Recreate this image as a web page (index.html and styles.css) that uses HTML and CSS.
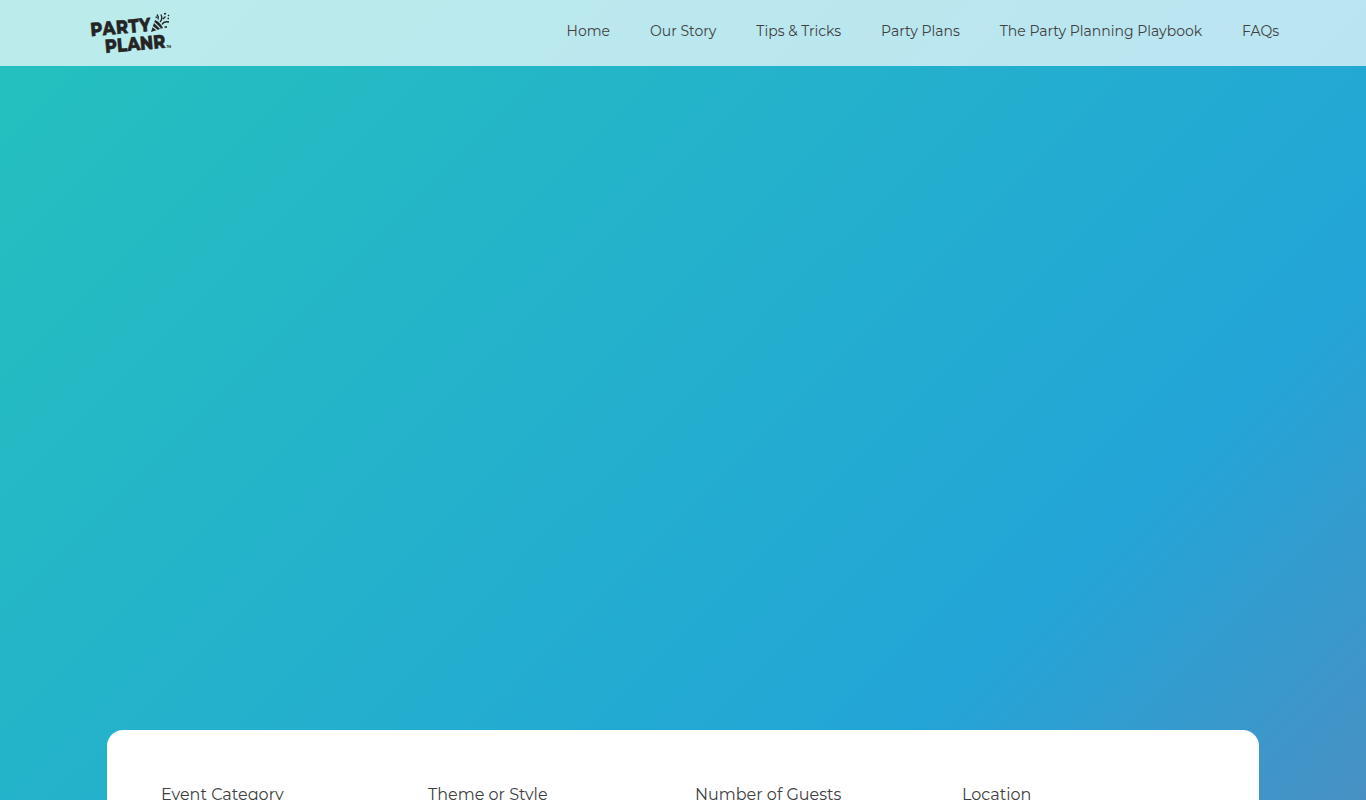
FILE: index.html
```html
<!DOCTYPE html>
<html lang="en">
<head>
<meta charset="utf-8">
<title>Party Planr</title>
<link rel="stylesheet" href="styles.css">
</head>
<body>
<div class="page">
<header class="header">
<a class="brand" aria-label="Party Planr">
<svg class="logo" viewBox="0 0 84 44" width="84" height="44">
<g class="logo-text">
<text textLength="70" lengthAdjust="spacing" transform="translate(2 26.3) rotate(-5) scale(.86 1)">PARTY</text>
<text textLength="70.500" lengthAdjust="spacing" transform="translate(16.5 43) rotate(-5) scale(.86 1)">PLANR</text>
</g>
<path class="ink" d="M62 22 66 10 Q71 12 74 18 Z"/>
<path class="stripe" d="M63.500 16.500 68 20M65.300 12.500 71.500 18.500"/>
<path class="spark" d="M69 9.500Q70 7 68 4.500M71 12Q74 9 72 4.500M73 14.500Q75 11 80 12M74 9 76.500 6.500M75 4 77 3.500M79 5 80 6M78.500 8.500 80 8.500M67 6.500 67.500 8M75.500 17 78 17"/>
<text class="mark" x="77.500" y="38">TM</text>
</svg>
</a>
<nav class="nav">
<a>Home</a>
<a>Our Story</a>
<a>Tips &amp; Tricks</a>
<a>Party Plans</a>
<a>The Party Planning Playbook</a>
<a>FAQs</a>
</nav>
</header>
<main class="hero">
<form class="card">
<label>Event Category</label>
<label>Theme or Style</label>
<label>Number of Guests</label>
<label>Location</label>
</form>
</main>
</div>
</body>
</html>
```
FILE: styles.css
```css
* { box-sizing: border-box; }
body { margin: 0; color: #404040; font-family: Montserrat, Inter, sans-serif; }
.page { display: flex; flex-direction: column; height: 800px; overflow: hidden; background: linear-gradient(135deg, #24c1bd 0%, #23a5d7 75.5%, #4890c4 100%); }
.header { display: flex; justify-content: space-between; flex: 0 0 66px; padding: 10px 87px 0 89px; background: rgba(255,255,255,.69); }
.logo { display: block; overflow: visible; }
.logo-text { font: 800 19px Montserrat, Lato, sans-serif; fill: #242424; stroke: #242424; stroke-width: .5; }
.ink { fill: #242424; }
.stripe { stroke: #b9eae9; stroke-width: 1.1; }
.spark { fill: none; stroke: #242424; stroke-width: 1.3; }
.mark { font: 700 3px Montserrat, sans-serif; fill: #242424; }
.nav { display: flex; gap: 40px; padding-top: 11px; font-size: 14px; line-height: 20px; font-weight: 400; white-space: nowrap; }
.hero { flex: 1; padding: 664px 107px 0; }
.card { display: grid; grid-template-columns: repeat(4, 267px); width: 1152px; height: 400px; padding: 53px 54px; border-radius: 16px; background: #fff; font-size: 16px; line-height: 24px; }
```
